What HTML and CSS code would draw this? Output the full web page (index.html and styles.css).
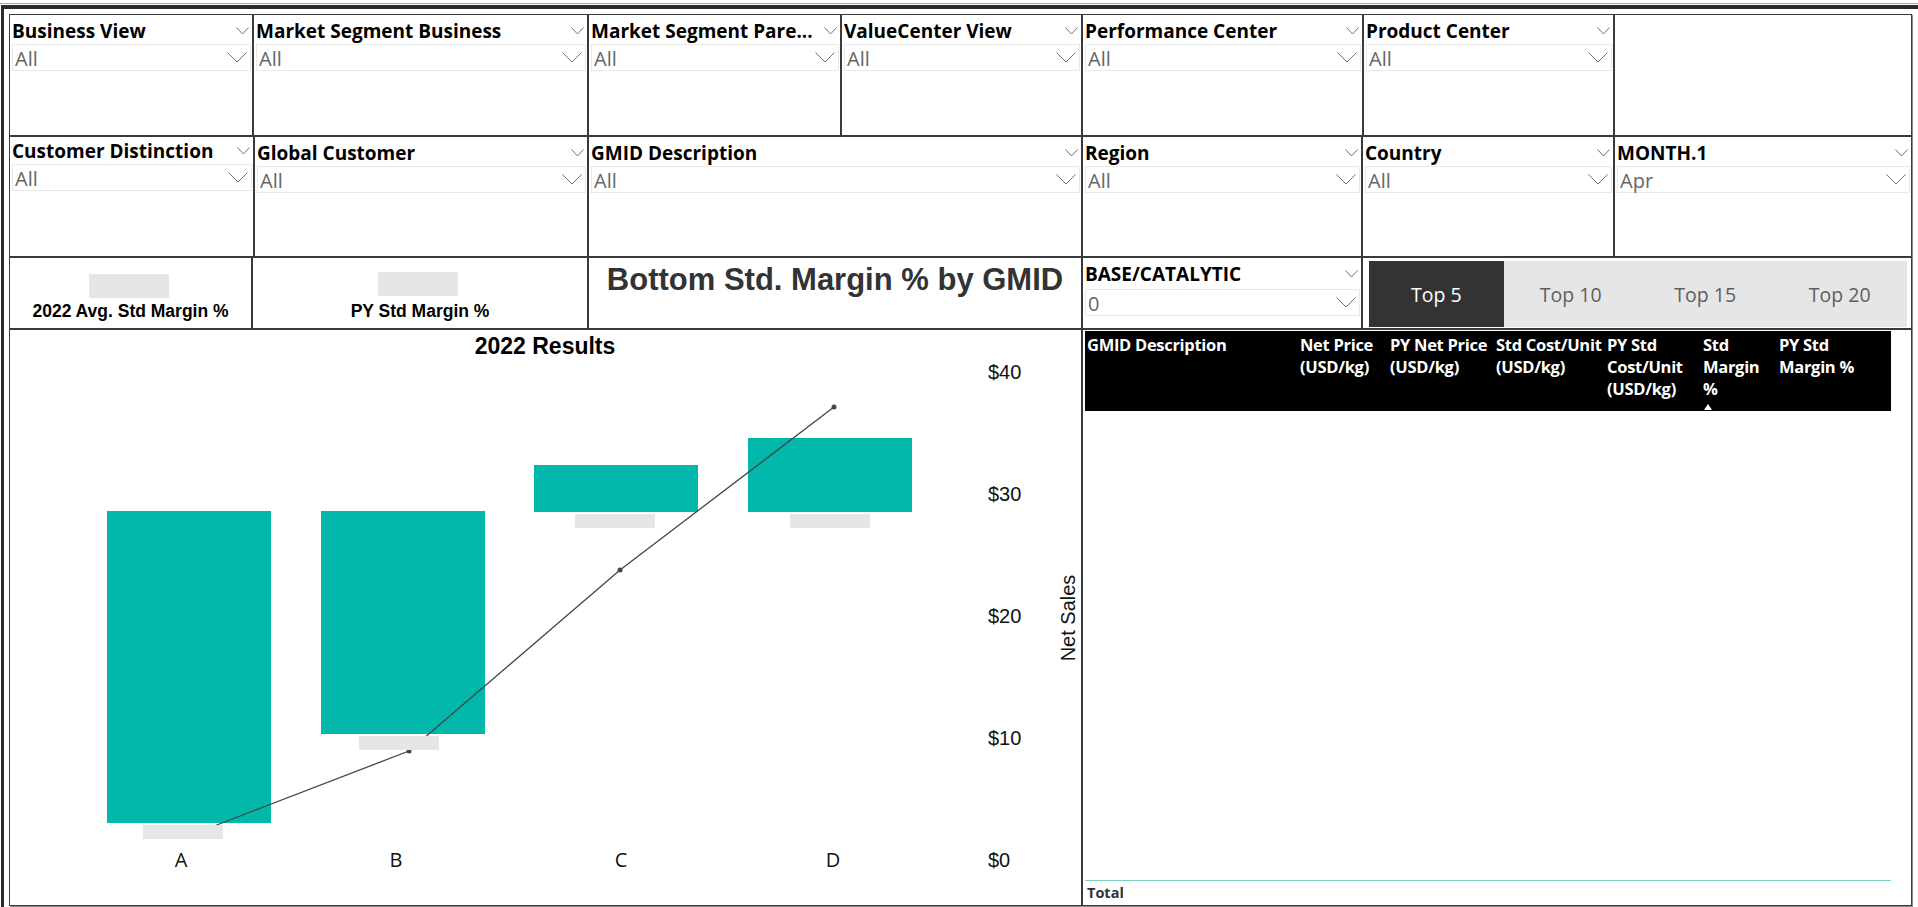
FILE: index.html
```html
<!DOCTYPE html>
<html>
<head>
<meta charset="utf-8">
<title>Bottom Std. Margin % by GMID</title>
<link rel="stylesheet" href="styles.css">
</head>
<body>
<div class="page">
  <div class="hair"></div>
  <div class="canvas">

    <div class="row r1">
      <div class="box slicer">
        <div class="sl-head"><span class="sl-title">Business View</span><svg class="chev-s" viewBox="0 0 13 8"><polyline points="0.5,0.5 6.5,7 12.5,0.5"/></svg></div>
        <div class="sl-drop"><span class="sl-val">All</span><svg class="chev-l" viewBox="0 0 20 11"><polyline points="0.5,0.5 10,10 19.5,0.5"/></svg></div>
      </div>
      <div class="box slicer">
        <div class="sl-head"><span class="sl-title">Market Segment Business</span><svg class="chev-s" viewBox="0 0 13 8"><polyline points="0.5,0.5 6.5,7 12.5,0.5"/></svg></div>
        <div class="sl-drop"><span class="sl-val">All</span><svg class="chev-l" viewBox="0 0 20 11"><polyline points="0.5,0.5 10,10 19.5,0.5"/></svg></div>
      </div>
      <div class="box slicer">
        <div class="sl-head"><span class="sl-title">Market Segment Pare...</span><svg class="chev-s" viewBox="0 0 13 8"><polyline points="0.5,0.5 6.5,7 12.5,0.5"/></svg></div>
        <div class="sl-drop"><span class="sl-val">All</span><svg class="chev-l" viewBox="0 0 20 11"><polyline points="0.5,0.5 10,10 19.5,0.5"/></svg></div>
      </div>
      <div class="box slicer">
        <div class="sl-head"><span class="sl-title">ValueCenter View</span><svg class="chev-s" viewBox="0 0 13 8"><polyline points="0.5,0.5 6.5,7 12.5,0.5"/></svg></div>
        <div class="sl-drop"><span class="sl-val">All</span><svg class="chev-l" viewBox="0 0 20 11"><polyline points="0.5,0.5 10,10 19.5,0.5"/></svg></div>
      </div>
      <div class="box slicer">
        <div class="sl-head"><span class="sl-title">Performance Center</span><svg class="chev-s" viewBox="0 0 13 8"><polyline points="0.5,0.5 6.5,7 12.5,0.5"/></svg></div>
        <div class="sl-drop"><span class="sl-val">All</span><svg class="chev-l" viewBox="0 0 20 11"><polyline points="0.5,0.5 10,10 19.5,0.5"/></svg></div>
      </div>
      <div class="box slicer">
        <div class="sl-head"><span class="sl-title">Product Center</span><svg class="chev-s" viewBox="0 0 13 8"><polyline points="0.5,0.5 6.5,7 12.5,0.5"/></svg></div>
        <div class="sl-drop"><span class="sl-val">All</span><svg class="chev-l" viewBox="0 0 20 11"><polyline points="0.5,0.5 10,10 19.5,0.5"/></svg></div>
      </div>
      <div class="box"></div>
    </div>

    <div class="row r2">
      <div class="box slicer up">
        <div class="sl-head"><span class="sl-title">Customer Distinction</span><svg class="chev-s" viewBox="0 0 13 8"><polyline points="0.5,0.5 6.5,7 12.5,0.5"/></svg></div>
        <div class="sl-drop"><span class="sl-val">All</span><svg class="chev-l" viewBox="0 0 20 11"><polyline points="0.5,0.5 10,10 19.5,0.5"/></svg></div>
      </div>
      <div class="box slicer">
        <div class="sl-head"><span class="sl-title">Global Customer</span><svg class="chev-s" viewBox="0 0 13 8"><polyline points="0.5,0.5 6.5,7 12.5,0.5"/></svg></div>
        <div class="sl-drop"><span class="sl-val">All</span><svg class="chev-l" viewBox="0 0 20 11"><polyline points="0.5,0.5 10,10 19.5,0.5"/></svg></div>
      </div>
      <div class="box slicer">
        <div class="sl-head"><span class="sl-title">GMID Description</span><svg class="chev-s" viewBox="0 0 13 8"><polyline points="0.5,0.5 6.5,7 12.5,0.5"/></svg></div>
        <div class="sl-drop"><span class="sl-val">All</span><svg class="chev-l" viewBox="0 0 20 11"><polyline points="0.5,0.5 10,10 19.5,0.5"/></svg></div>
      </div>
      <div class="box slicer">
        <div class="sl-head"><span class="sl-title">Region</span><svg class="chev-s" viewBox="0 0 13 8"><polyline points="0.5,0.5 6.5,7 12.5,0.5"/></svg></div>
        <div class="sl-drop"><span class="sl-val">All</span><svg class="chev-l" viewBox="0 0 20 11"><polyline points="0.5,0.5 10,10 19.5,0.5"/></svg></div>
      </div>
      <div class="box slicer">
        <div class="sl-head"><span class="sl-title">Country</span><svg class="chev-s" viewBox="0 0 13 8"><polyline points="0.5,0.5 6.5,7 12.5,0.5"/></svg></div>
        <div class="sl-drop"><span class="sl-val">All</span><svg class="chev-l" viewBox="0 0 20 11"><polyline points="0.5,0.5 10,10 19.5,0.5"/></svg></div>
      </div>
      <div class="box slicer">
        <div class="sl-head"><span class="sl-title">MONTH.1</span><svg class="chev-s" viewBox="0 0 13 8"><polyline points="0.5,0.5 6.5,7 12.5,0.5"/></svg></div>
        <div class="sl-drop"><span class="sl-val">Apr</span><svg class="chev-l" viewBox="0 0 20 11"><polyline points="0.5,0.5 10,10 19.5,0.5"/></svg></div>
      </div>
    </div>

    <div class="row r3">
      <div class="box card c1">
        <div class="ph"></div>
        <div class="card-label">2022 Avg. Std Margin %</div>
      </div>
      <div class="box card c2">
        <div class="ph"></div>
        <div class="card-label">PY Std Margin %</div>
      </div>
      <div class="box title-card">Bottom Std. Margin % by GMID</div>
      <div class="box slicer low">
        <div class="sl-head"><span class="sl-title">BASE/CATALYTIC</span><svg class="chev-s" viewBox="0 0 13 8"><polyline points="0.5,0.5 6.5,7 12.5,0.5"/></svg></div>
        <div class="sl-drop"><span class="sl-val">0</span><svg class="chev-l" viewBox="0 0 20 11"><polyline points="0.5,0.5 10,10 19.5,0.5"/></svg></div>
      </div>
      <div class="box seg">
        <div class="btn on">Top 5</div>
        <div class="btn">Top 10</div>
        <div class="btn">Top 15</div>
        <div class="btn">Top 20</div>
      </div>
    </div>

    <div class="row r4">
      <div class="box chart">
        <svg class="chart-svg" viewBox="10 330 1071 575">
          <text class="ct" x="545" y="354" text-anchor="middle">2022 Results</text>
          <rect class="bar" x="107" y="511" width="164" height="312"/>
          <rect class="bar" x="321" y="511" width="164" height="223"/>
          <rect class="bar" x="534" y="465" width="164" height="47"/>
          <rect class="bar" x="748" y="438" width="164" height="74"/>
          <polyline class="trend" points="183,838 409,751 620,570 834,407"/>
          <circle class="mk" cx="409" cy="751" r="2.5"/>
          <circle class="mk" cx="620" cy="570" r="2.5"/>
          <circle class="mk" cx="834" cy="407" r="2.5"/>
          <rect class="phr" x="143" y="825" width="80" height="14"/>
          <rect class="phr" x="359" y="736" width="80" height="14"/>
          <rect class="phr" x="575" y="514" width="80" height="14"/>
          <rect class="phr" x="790" y="514" width="80" height="14"/>
          <text class="ax" x="988" y="379">$40</text>
          <text class="ax" x="988" y="501">$30</text>
          <text class="ax" x="988" y="623">$20</text>
          <text class="ax" x="988" y="745">$10</text>
          <text class="ax" x="988" y="867">$0</text>
          <text class="ax" x="1075" y="618" text-anchor="middle" transform="rotate(-90 1075 618)">Net Sales</text>
          <text class="xl" x="181" y="867" text-anchor="middle">A</text>
          <text class="xl" x="396" y="867" text-anchor="middle">B</text>
          <text class="xl" x="621" y="867" text-anchor="middle">C</text>
          <text class="xl" x="833" y="867" text-anchor="middle">D</text>
        </svg>
      </div>
      <div class="box table-box">
        <div class="thead">
          <div class="th">GMID Description</div>
          <div class="th">Net Price<br>(USD/kg)</div>
          <div class="th">PY Net Price<br>(USD/kg)</div>
          <div class="th">Std Cost/Unit<br>(USD/kg)</div>
          <div class="th">PY Std<br>Cost/Unit<br>(USD/kg)</div>
          <div class="th">Std<br>Margin<br>%<div class="sort-arrow"></div></div>
          <div class="th">PY Std<br>Margin %</div>
        </div>
        <div class="tbody"></div>
        <div class="total">Total</div>
      </div>
    </div>

  </div>
</div>
</body>
</html>
```

FILE: styles.css
```css
* {
  box-sizing: border-box;
}

body {
  margin: 0;
  background: #ffffff;
  font-family: "Open Sans", "Noto Sans", sans-serif;
}

.page {
  width: 1918px;
  height: 907px;
  overflow: hidden;
  padding-top: 3px;
}

.hair {
  height: 1px;
  background: #a8a8a8;
}

.canvas {
  margin: 1px 0 0 1px;
  border-top: 4px solid #2b2b2b;
  border-left: 3px solid #2b2b2b;
  padding: 5px 0 0 5px;
  height: 903px;
  display: flex;
  flex-direction: column;
}

.row {
  display: grid;
}

.r1 {
  grid-template-columns: 244px 335px 253px 241px 281px 251px 298px;
  height: 122px;
}

.r2 {
  grid-template-columns: 245px 334px 494px 280px 252px 298px;
  height: 121px;
}

.r3 {
  grid-template-columns: 243px 336px 494px 280px 550px;
  height: 72px;
}

.r4 {
  grid-template-columns: 1073px 830px;
  height: 577px;
}

.box {
  border: 1px solid #3a3a3a;
  background: #ffffff;
  box-shadow: 1px 1px 0 #8c8c8c;
  min-width: 0;
}

/* slicers */
.slicer {
  display: flex;
  flex-direction: column;
  padding: 2px 1px 0 2px;
}

.slicer.up {
  padding-top: 0;
}

.slicer.low .sl-drop {
  margin-top: 2px;
}

.sl-head {
  display: flex;
  align-items: center;
  height: 26px;
  margin-top: 1px;
  padding-right: 2px;
}

.sl-title {
  flex: 1;
  min-width: 0;
  white-space: nowrap;
  overflow: hidden;
  font-weight: 700;
  font-size: 19px;
  line-height: 26px;
  color: #000000;
}

.chev-s {
  width: 13px;
  height: 8px;
  flex: none;
  margin-left: 4px;
}

.chev-s polyline,
.chev-l polyline {
  fill: none;
  stroke: #707070;
  stroke-width: 1;
}

.sl-drop {
  display: flex;
  align-items: center;
  height: 27px;
  border: 1px solid #e9e9e9;
  padding: 0 3px 0 2px;
}

.sl-val {
  flex: 1;
  font-size: 20px;
  line-height: 25px;
  padding-top: 2px;
  color: #666666;
  white-space: nowrap;
}

.chev-l {
  width: 20px;
  height: 11px;
  flex: none;
}

/* cards */
.card {
  display: flex;
  flex-direction: column;
  align-items: center;
}

.ph {
  width: 80px;
  height: 24px;
  background: #e6e6e6;
}

.c1 .ph {
  margin-top: 16px;
  margin-right: 4px;
}

.c2 .ph {
  margin-top: 14px;
  margin-right: 4px;
}

.card-label {
  font-family: "Liberation Sans", Arial, sans-serif;
  font-weight: 700;
  font-size: 17.5px;
  line-height: 20px;
  color: #000000;
  margin-top: 3px;
}

.c2 .card-label {
  margin-top: 5px;
}

.title-card {
  font-family: "Liberation Sans", Arial, sans-serif;
  font-weight: 700;
  font-size: 31px;
  line-height: 34px;
  color: #333333;
  text-align: center;
  padding-top: 5px;
  white-space: nowrap;
}

/* segmented buttons */
.seg {
  display: flex;
  padding: 3px 4px 1px 6px;
}

.btn {
  flex: 1;
  display: flex;
  align-items: center;
  justify-content: center;
  background: #e6e6e6;
  color: #605e5c;
  font-size: 19.5px;
}

.btn.on {
  background: #333333;
  color: #ffffff;
}

/* chart */
.chart-svg {
  display: block;
  width: 100%;
  height: 100%;
}

.bar {
  fill: #01b8aa;
}

.phr {
  fill: #e6e6e6;
}

.trend {
  fill: none;
  stroke: #3e4848;
  stroke-width: 1.3;
}

.mk {
  fill: #3e4848;
}

.ct {
  font-family: "Liberation Sans", Arial, sans-serif;
  font-weight: 700;
  font-size: 23px;
  fill: #000000;
}

.ax {
  font-family: "Liberation Sans", Arial, sans-serif;
  font-size: 20px;
  fill: #111111;
}

.xl {
  font-family: "Open Sans", sans-serif;
  font-size: 20px;
  fill: #111111;
}

/* table */
.table-box {
  display: flex;
  flex-direction: column;
  padding: 1px 20px 0 2px;
}

.thead {
  height: 80px;
  background: #000000;
  display: grid;
  grid-template-columns: 213px 90px 106px 111px 96px 76px 1fr;
  padding: 3px 0 0 2px;
}

.th {
  color: #ffffff;
  font-weight: 700;
  font-size: 16.5px;
  line-height: 22px;
  white-space: nowrap;
  letter-spacing: -0.3px;
}

.sort-arrow {
  width: 0;
  height: 0;
  margin: 4px 0 0 1px;
  border-left: 4px solid transparent;
  border-right: 4px solid transparent;
  border-bottom: 6px solid #ffffff;
}

.tbody {
  flex: 1;
}

.total {
  height: 25px;
  border-top: 1px solid #7fcfc7;
  padding-left: 2px;
  font-weight: 700;
  font-size: 14.5px;
  line-height: 24px;
  color: #333333;
}
```
